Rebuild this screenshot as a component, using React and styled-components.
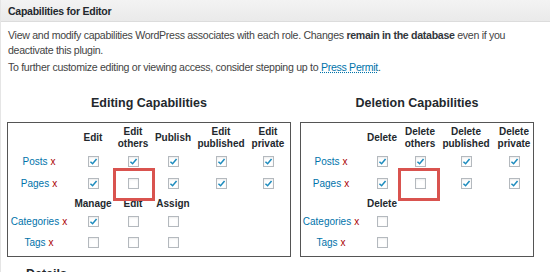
import React from "react";
import styled, { createGlobalStyle } from "styled-components";

const GlobalStyle = createGlobalStyle`
  html, body {
    margin: 0;
    padding: 0;
    background: #ffffff;
  }
  body {
    font-family: "Liberation Sans", Arial, sans-serif;
    color: #444;
    overflow: hidden;
  }
`;

const Box = styled.div`
  width: 550px;
  height: 272px;
  border-left: 1px solid #e5e5e5;
  box-sizing: border-box;
  overflow: hidden;
`;

const Header = styled.div`
  height: 21px;
  display: flex;
  align-items: center;
  padding-left: 7px;
  background: linear-gradient(#f3f3f3, #eaeaea);
  border-bottom: 1px solid #dcdcdc;
  font-size: 10.5px;
  letter-spacing: -0.25px;
  font-weight: bold;
  color: #23282d;
`;

const Body = styled.div`
  padding: 6px 0 0 7px;
`;

const Para = styled.p`
  margin: 0 0 2px;
  font-size: 10.6px;
  letter-spacing: -0.3px;
  line-height: 15px;
  color: #444;
`;

const Strong = styled.b`
  color: #32373c;
`;

const Link = styled.a`
  color: #0073aa;
  text-decoration: underline;
  text-decoration-style: dotted;
`;

const Tables = styled.div`
  display: flex;
  gap: 9px;
  margin-top: 21px;
  padding-left: 6px;
`;

const Section = styled.div`
  display: flex;
  flex-direction: column;
  align-items: center;
`;

const Heading = styled.h3`
  margin: 0 0 12px;
  font-size: 12.5px;
  line-height: 14px;
  font-weight: bold;
  color: #23282d;
`;

const Grid = styled.div`
  position: relative;
  display: grid;
  grid-template-columns: ${(p) => p.$cols};
  grid-template-rows: 28px 21px 22px 17px 20px 22px;
  border: 1px solid #555;
  padding-bottom: 3px;
  font-size: 10px;
`;

const Cell = styled.div`
  display: flex;
  align-items: center;
  justify-content: center;
  text-align: center;
`;

const ColHead = styled(Cell)`
  font-weight: bold;
  color: #23282d;
  line-height: 12px;
  padding-top: ${(p) => (p.$sub ? "3px" : "2px")};
`;

const RowLabel = styled(Cell)`
  color: #0073aa;
  white-space: nowrap;
`;

const Remove = styled.span`
  color: #a00;
  margin-left: 3px;
`;

const Check = styled.span`
  width: 11px;
  height: 11px;
  box-sizing: border-box;
  border: 1px solid #b4b9be;
  background: #fff;
  box-shadow: inset 0 1px 2px rgba(0, 0, 0, 0.08);
  display: flex;
  align-items: center;
  justify-content: center;
`;

const Highlight = styled.div`
  position: absolute;
  border: 3px solid #d9534f;
  box-sizing: border-box;
  pointer-events: none;
`;

const Details = styled.h3`
  margin: 10px 0 0 25px;
  font-size: 12.5px;
  font-weight: bold;
  color: #23282d;
`;

const Box2 = ({ on }) => (
  <Cell>
    <Check>
      {on && (
        <svg width="9" height="9" viewBox="0 0 10 10">
          <path d="M1.6 5.2 L4 7.5 L8.4 2.2" fill="none" stroke="#1e8cbe" strokeWidth="1.7" />
        </svg>
      )}
    </Check>
  </Cell>
);

const Label = ({ children }) => (
  <RowLabel>
    {children}
    <Remove>x</Remove>
  </RowLabel>
);

const Empty = () => <Cell />;

const editHeads = [["Edit"], ["Edit", "others"], ["Publish"], ["Edit", "published"], ["Edit", "private"]];
const delHeads = [["Delete"], ["Delete", "others"], ["Delete", "published"], ["Delete", "private"]];

const Head = ({ lines, sub }) => (
  <ColHead $sub={sub}>
    <div>
      {lines.map((l, i) => (
        <div key={i}>{l}</div>
      ))}
    </div>
  </ColHead>
);

export default function App() {
  return (
    <>
      <GlobalStyle />
      <Box>
        <Header>Capabilities for Editor</Header>
        <Body>
          <Para>
            View and modify capabilities WordPress associates with each role. Changes{" "}
            <Strong>remain in the database</Strong> even if you
            <br />
            deactivate this plugin.
          </Para>
          <Para>
            To further customize editing or viewing access, consider stepping up to{" "}
            <Link href="#">Press Permit</Link>.
          </Para>
        </Body>
        <Tables>
          <Section>
            <Heading>Editing Capabilities</Heading>
            <Grid $cols="62px 46px 34px 46px 50px 44px">
              <Empty />
              {editHeads.map((h, i) => (
                <Head key={i} lines={h} />
              ))}
              <Label>Posts</Label>
              <Box2 on />
              <Box2 on />
              <Box2 on />
              <Box2 on />
              <Box2 on />
              <Label>Pages</Label>
              <Box2 on />
              <Box2 />
              <Box2 on />
              <Box2 on />
              <Box2 on />
              <Empty />
              <Head lines={["Manage"]} sub />
              <Head lines={["Edit"]} sub />
              <Head lines={["Assign"]} sub />
              <Empty />
              <Empty />
              <Label>Categories</Label>
              <Box2 on />
              <Box2 />
              <Box2 />
              <Empty />
              <Empty />
              <Label>Tags</Label>
              <Box2 />
              <Box2 />
              <Box2 />
              <Empty />
              <Empty />
              <Highlight style={{ left: 105, top: 45, width: 42, height: 33 }} />
            </Grid>
          </Section>
          <Section>
            <Heading>Deletion Capabilities</Heading>
            <Grid $cols="60px 42px 34px 58px 38px">
              <Empty />
              {delHeads.map((h, i) => (
                <Head key={i} lines={h} />
              ))}
              <Label>Posts</Label>
              <Box2 on />
              <Box2 on />
              <Box2 on />
              <Box2 on />
              <Label>Pages</Label>
              <Box2 on />
              <Box2 />
              <Box2 on />
              <Box2 on />
              <Empty />
              <Head lines={["Delete"]} sub />
              <Empty />
              <Empty />
              <Empty />
              <Label>Categories</Label>
              <Box2 />
              <Empty />
              <Empty />
              <Empty />
              <Label>Tags</Label>
              <Box2 />
              <Empty />
              <Empty />
              <Empty />
              <Highlight style={{ left: 97, top: 45, width: 42, height: 33 }} />
            </Grid>
          </Section>
        </Tables>
        <Details>Details</Details>
      </Box>
    </>
  );
}
